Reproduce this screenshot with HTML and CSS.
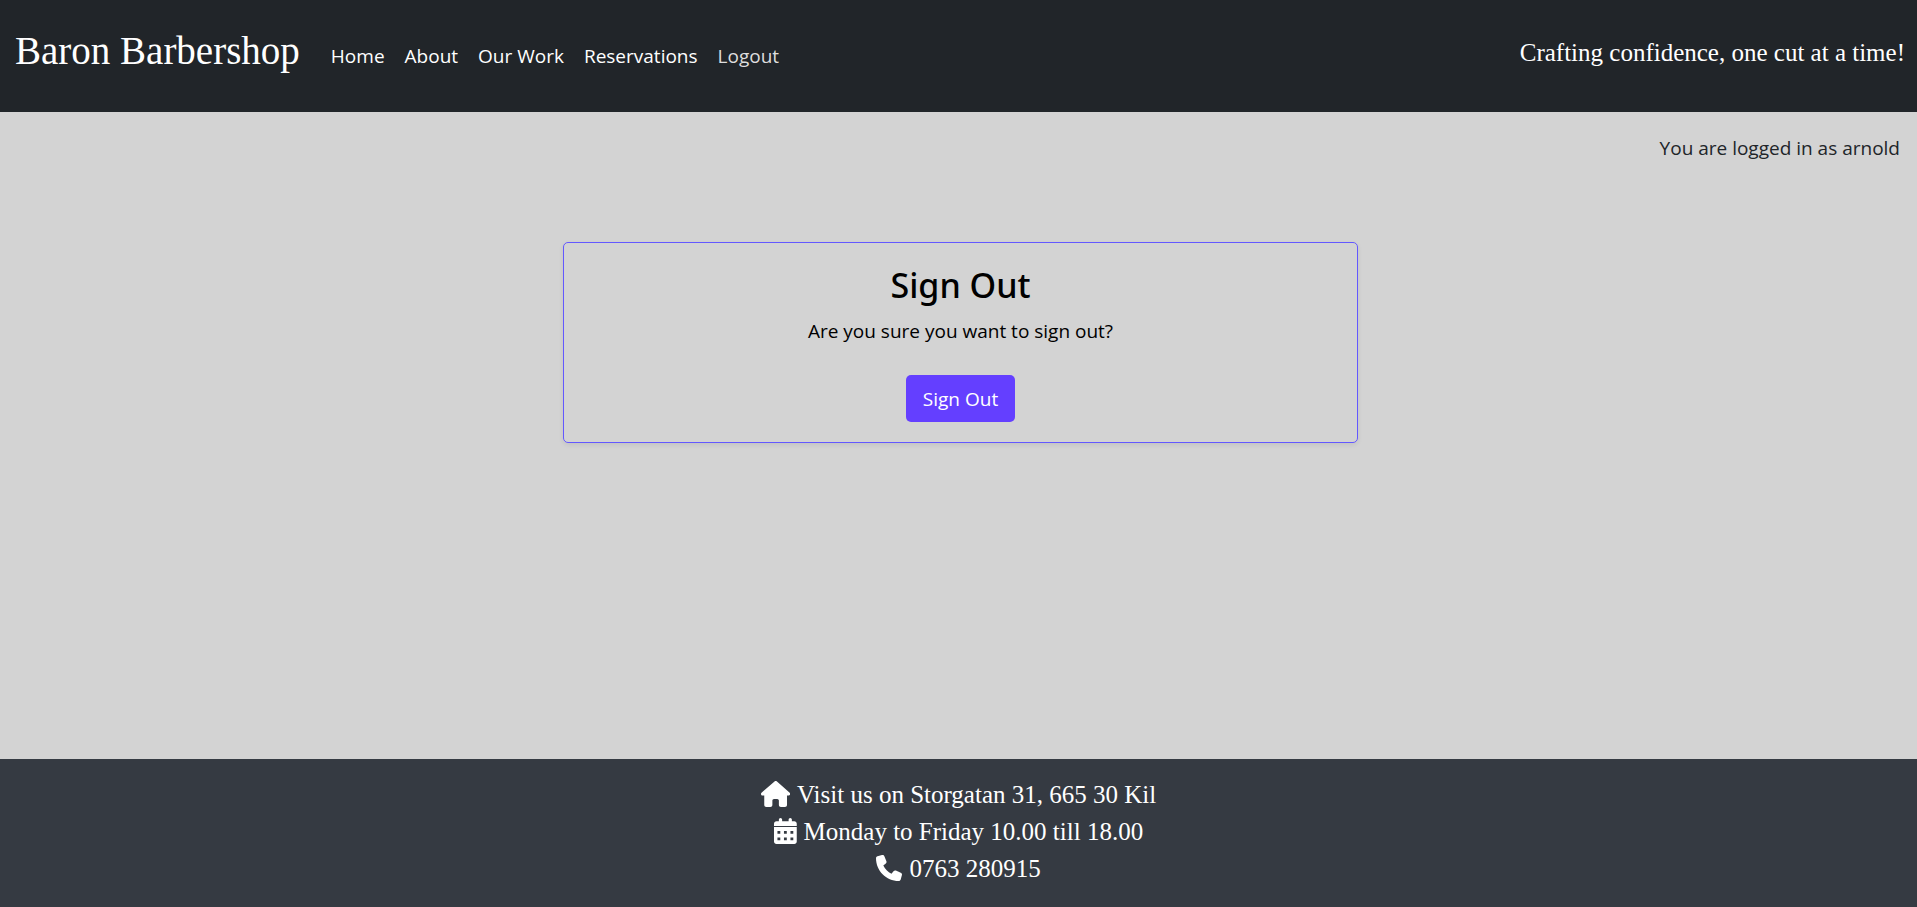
FILE: index.html
```html
<!DOCTYPE html>
<html lang="en">
<head>
<meta charset="utf-8">
<meta name="viewport" content="width=device-width, initial-scale=1">
<title>Baron Barbershop</title>
<link rel="stylesheet" href="styles.css">
</head>
<body>
<header class="navbar">
  <a class="brand" href="#">Baron Barbershop</a>
  <nav class="nav" aria-label="Main">
    <a class="nav-link" href="#">Home</a>
    <a class="nav-link" href="#">About</a>
    <a class="nav-link" href="#">Our Work</a>
    <a class="nav-link" href="#">Reservations</a>
    <a class="nav-link nav-link-muted" href="#">Logout</a>
  </nav>
  <p class="tagline">Crafting confidence, one cut at a time!</p>
</header>
<main class="main">
  <p class="status">You are logged in as arnold</p>
  <div class="content">
    <form class="card">
      <h1 class="card-title">Sign Out</h1>
      <p class="card-text">Are you sure you want to sign out?</p>
      <button class="button" type="button">Sign Out</button>
    </form>
  </div>
</main>
<footer class="footer">
  <p class="footer-line">
    <svg class="icon" viewBox="0 0 576 512" aria-hidden="true"><path d="M575.8 255.5c0 18-15 32.1-32 32.1h-32l.7 160.2c0 2.7-.2 5.4-.5 8.1V472c0 22.1-17.9 40-40 40H456c-1.1 0-2.2 0-3.3-.1c-1.4 .1-2.8 .1-4.2 .1H416 392c-22.1 0-40-17.9-40-40V448 384c0-17.7-14.3-32-32-32H256c-17.7 0-32 14.3-32 32v64 24c0 22.1-17.9 40-40 40H160 128.1c-1.5 0-3-.1-4.5-.2c-1.2 .1-2.4 .2-3.6 .2H104c-22.1 0-40-17.9-40-40V360c0-.9 0-1.9 .1-2.8V287.6H32c-18 0-32-14-32-32.1c0-9 3-17 10-24L266.4 8c7-7 15-8 22-8s15 2 21 7L564.8 231.5c8 7 12 15 11 24z"/></svg>
    <span>Visit us on Storgatan 31, 665 30 Kil</span>
  </p>
  <p class="footer-line">
    <svg class="icon" viewBox="0 0 448 512" aria-hidden="true"><path fill-rule="evenodd" d="M128 0c17.7 0 32 14.3 32 32V64H288V32c0-17.7 14.3-32 32-32s32 14.3 32 32V64h48c26.5 0 48 21.5 48 48v44H0V112C0 85.5 21.5 64 48 64H96V32c0-17.7 14.3-32 32-32zM0 178H448V464c0 26.5-21.5 48-48 48H48c-26.5 0-48-21.5-48-48V178zM68 256v56h56v-56zM196 256v56h56v-56zM324 256v56h56v-56zM68 384v56h56v-56zM196 384v56h56v-56zM324 384v56h56v-56z"/></svg>
    <span>Monday to Friday 10.00 till 18.00</span>
  </p>
  <p class="footer-line">
    <svg class="icon" viewBox="0 0 512 512" aria-hidden="true"><path d="M164.9 24.6c-7.7-18.6-28-28.5-47.4-23.2l-88 24C12.1 30.2 0 46 0 64C0 311.4 200.6 512 448 512c18 0 33.8-12.1 38.6-29.5l24-88c5.3-19.4-4.6-39.7-23.2-47.4l-96-40c-16.3-6.8-35.2-2.1-46.3 11.6L304.7 368C234.3 334.7 177.3 277.7 144 207.3L193.3 167c13.7-11.2 18.4-30 11.6-46.3l-40-96z"/></svg>
    <span>0763 280915</span>
  </p>
</footer>
</body>
</html>
```
FILE: styles.css
```css
* {
  box-sizing: border-box;
}

body {
  margin: 0;
  min-height: 100vh;
  display: flex;
  flex-direction: column;
  background: #d3d3d3;
  color: #212529;
  font: 400 19px/30px "Open Sans", "Noto Sans", sans-serif;
}

p,
h1 {
  margin: 0;
}

.navbar {
  display: flex;
  align-items: flex-start;
  padding: 21px 12px 31px 15px;
  background: #212529;
  color: #fff;
}

.brand {
  margin-right: 21px;
  color: #fff;
  font: 400 39px/60px "Liberation Serif", serif;
  text-decoration: none;
}

.nav {
  display: flex;
  padding-top: 20px;
}

.nav-link {
  padding: 0 10px;
  color: #fff;
  text-decoration: none;
}

.nav-link-muted {
  color: #dedede;
}

.tagline {
  margin-left: auto;
  padding-top: 15px;
  font: 400 25px/34px "Liberation Serif", serif;
}

.main {
  flex: 1;
}

.status {
  padding: 21px 17px 0;
  text-align: right;
}

.content {
  padding: 79px 0 20px 4px;
}

.card {
  width: 100%;
  max-width: 795px;
  margin: 0 auto;
  padding: 20px;
  border: 1px solid #6358ff;
  border-radius: 5px;
  box-shadow: 0 2px 5px rgba(0, 0, 0, 0.08);
  color: #000;
  text-align: center;
}

.card-title {
  margin-bottom: 9px;
  font-family: "Noto Sans", sans-serif;
  font-size: 34px;
  font-weight: 500;
  line-height: 44px;
}

.card-text {
  margin-bottom: 29px;
}

.button {
  display: inline-block;
  height: 47px;
  padding: 0 17px;
  border: 0;
  border-radius: 5px;
  background: #643fff;
  color: #fff;
  font: inherit;
  vertical-align: top;
}

.footer {
  padding: 17px 16px 20px;
  background: #353a42;
  color: #fff;
}

.footer-line {
  display: flex;
  justify-content: center;
  align-items: center;
  gap: 7px;
  font: 400 25px/37px "Liberation Serif", serif;
}

.icon {
  height: 26px;
  margin-bottom: 2px;
  fill: currentColor;
}
```
